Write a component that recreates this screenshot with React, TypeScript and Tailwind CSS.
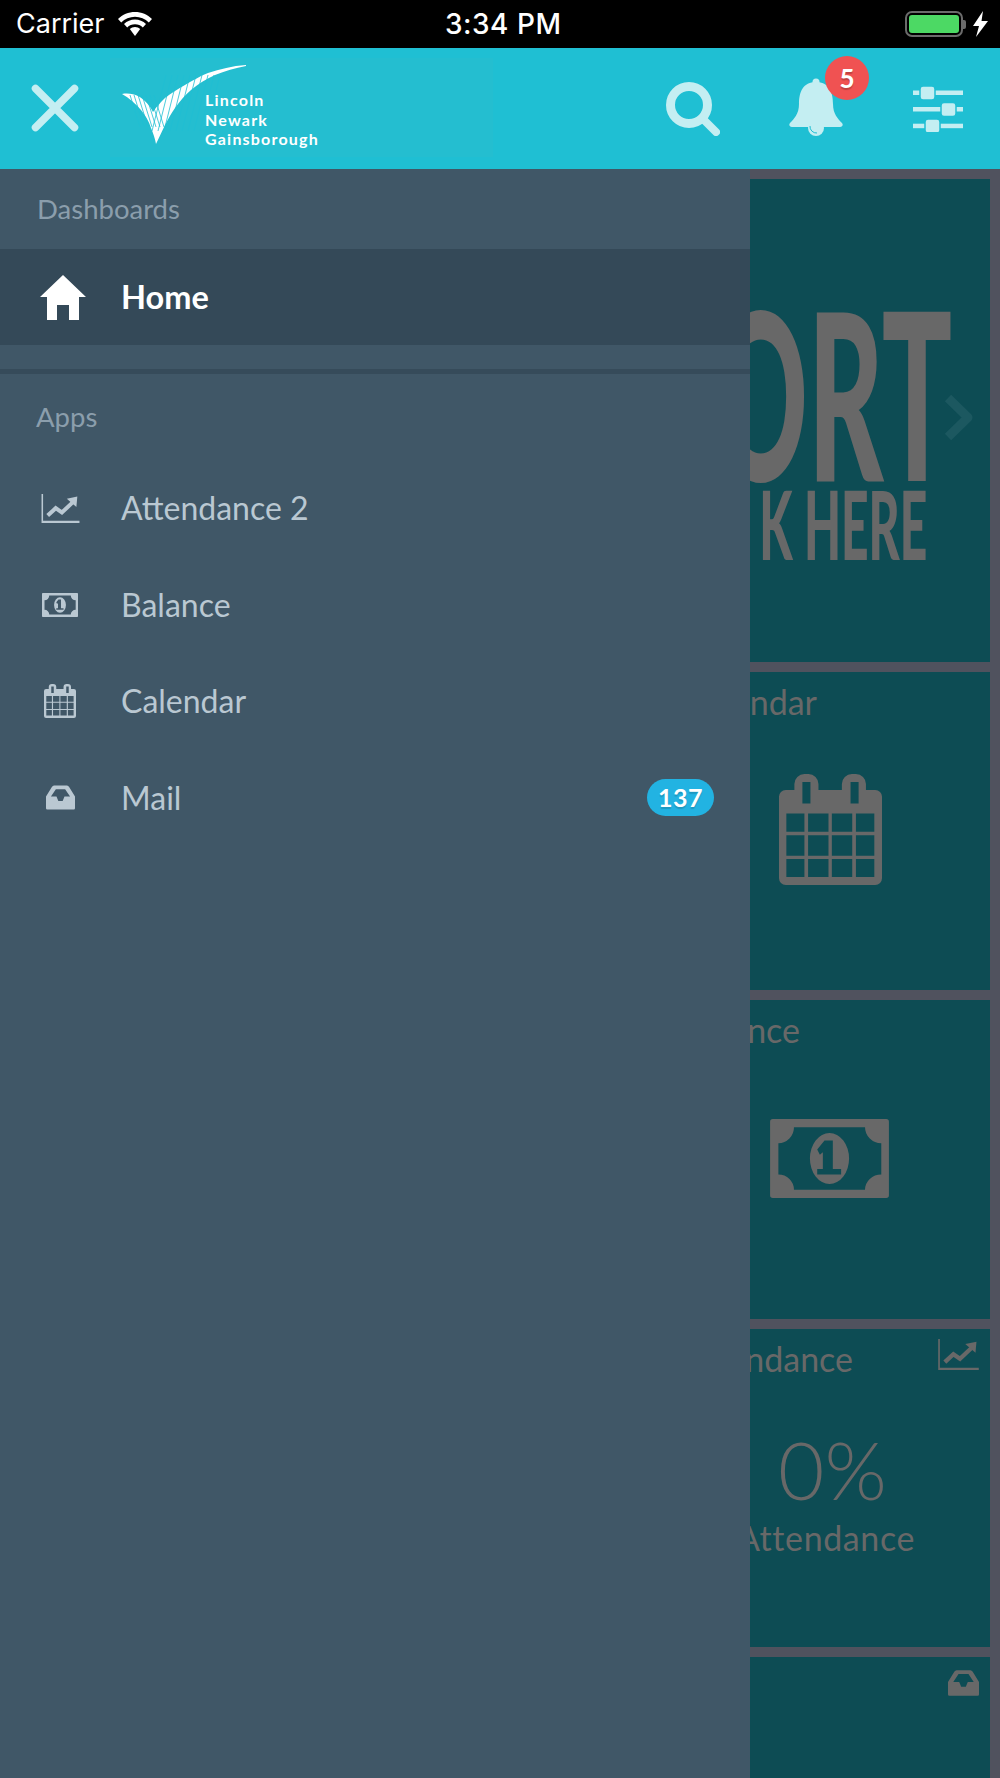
import type { ReactNode } from 'react'

const ICON_LIGHT = '#c4eef2'
const HEADER_BG = '#1fbfd3'

function Wifi() {
  return (
    <svg width="34" height="24" viewBox="0 0 34 24" fill="white">
      <path d="M17 0 C10.500 0 4.500 2.500 0 7 L3.200 10.500 C6.800 6.900 11.700 4.800 17 4.800 C22.300 4.800 27.200 6.900 30.800 10.500 L34 7 C29.500 2.500 23.500 0 17 0 Z" />
      <path d="M17 7.500 C12.800 7.500 9 9.100 6 12 L9.200 15.400 C11.300 13.400 14 12.200 17 12.200 C20 12.200 22.700 13.400 24.800 15.400 L28 12 C25 9.100 21.200 7.500 17 7.500 Z" />
      <path d="M17 15 C15 15 13.200 15.700 11.800 17 L17 24 L22.200 17 C20.800 15.700 19 15 17 15 Z" />
    </svg>
  )
}

function Logo() {
  return (
    <div className="flex h-[99px] w-[383px] items-start bg-[#24bed0] pt-[7px] pl-[12px]">
      <svg className="shrink-0" width="124" height="80" viewBox="0 0 124 80" fill="white">
        <path d="M0 29 C6 28 12 29 16 31 C23 35 28 41 31 47 C35 41 39 37 43 33 C49 28 56 24 63 20 C70 16 78 11 86 8 C98 4 110 1 124 0 L124 1 C113 3 103 6 93 10 C84 14 76 19 69 25 C63 30 58 36 53 43 C49 49 46 54 43 60 C40 66 37 73 34 79 C33 73 31 68 29 63 C27 56 23 50 19 45 C14 39 7 33 0 29 Z" />
        <g stroke={HEADER_BG} strokeWidth="0.8">
          {[8, 12, 16, 20, 24, 28, 32].map(x => (
            <line key={x} x1={x} y1="30" x2={x + 10} y2="62" />
          ))}
          {[44, 50, 56, 62, 68, 74, 80, 86, 92, 98].map(x => (
            <line key={x} x1={x} y1="10" x2={x - 14} y2="66" />
          ))}
        </g>
      </svg>
      <div className="mt-[25px] ml-[-41px] flex flex-col font-['Lato',sans-serif] text-[16px] leading-[19.5px] font-bold tracking-[1.2px] text-white">
        <span>Lincoln</span>
        <span>Newark</span>
        <span>Gainsborough</span>
      </div>
    </div>
  )
}

function SearchIcon() {
  return (
    <svg width="54" height="54" viewBox="0 0 54 54" fill="none" stroke={ICON_LIGHT} strokeLinecap="round">
      <circle cx="23" cy="23" r="18.500" strokeWidth="9" />
      <path d="M37 37 L50 50" strokeWidth="8" />
    </svg>
  )
}

function Bell() {
  return (
    <svg width="54" height="58" viewBox="0 0 54 58" fill={ICON_LIGHT}>
      <circle cx="27" cy="4" r="3.500" />
      <path d="M27 4 C40 4 44 14 44 26 C44 36 49 41 53 45 C54.500 47 53.500 49 51 49 L3 49 C0.500 49 -0.500 47 1 45 C5 41 10 36 10 26 C10 14 14 4 27 4 Z" />
      <circle cx="27" cy="50" r="8" />
      <path d="M21 48 A6.500 6.500 0 0 0 28 55" fill="none" stroke={HEADER_BG} strokeWidth="1" />
    </svg>
  )
}

function Sliders() {
  return (
    <svg width="50" height="46" viewBox="0 0 50 46" fill={ICON_LIGHT}>
      <rect x="0" y="4.500" width="50" height="4.500" />
      <rect x="0" y="21" width="50" height="4.500" />
      <rect x="0" y="37.700" width="50" height="4.500" />
      <rect x="7" y="0" width="15" height="14" rx="3" stroke={HEADER_BG} strokeWidth="1.500" />
      <rect x="28" y="16.500" width="15" height="14" rx="3" stroke={HEADER_BG} strokeWidth="1.500" />
      <rect x="12" y="33" width="15" height="14" rx="3" stroke={HEADER_BG} strokeWidth="1.500" />
    </svg>
  )
}

function HomeIcon() {
  return (
    <svg width="46" height="45" viewBox="0 0 46 45" fill="white">
      <path d="M23 0 L46 22 L39 22 L39 45 L29 45 L29 30 L17 30 L17 45 L7 45 L7 22 L0 22 Z" />
    </svg>
  )
}

function ChartIcon({ className }: { className: string }) {
  return (
    <svg viewBox="0 0 123 94" className={className} fill="currentColor">
      <path d="M0 0 H5 V87 H123 V94 H0 Z" />
      <path d="M20 70 L46 46 L66 60 L100 28" fill="none" stroke="currentColor" strokeWidth="13" />
      <path d="M82 15 L116 8 L113 42 Z" />
    </svg>
  )
}

function BillIcon({ className }: { className: string }) {
  return (
    <svg viewBox="0 0 358 238" className={className} fill="currentColor">
      <path
        fillRule="evenodd"
        d="M8 0 H350 A8 8 0 0 1 358 8 V230 A8 8 0 0 1 350 238 H8 A8 8 0 0 1 0 230 V8 A8 8 0 0 1 8 0 Z M72 25 A47 48 0 0 1 25 73 V167 A47 46 0 0 1 72 213 H286 A49 46 0 0 1 335 167 V73 A49 48 0 0 1 286 25 Z"
      />
      <path
        fillRule="evenodd"
        d="M120 119 A59 77 0 1 0 238 119 A59 77 0 1 0 120 119 Z M142 92 L164 65 H189 V151 H214 V167 H142 V151 H159 V100 L150 108 Z"
      />
    </svg>
  )
}

function CalendarIcon({ className }: { className: string }) {
  return (
    <svg viewBox="0 0 308 334" preserveAspectRatio="none" className={className} fill="currentColor">
      <path
        fillRule="evenodd"
        d="M20 48 H46 V30 A30 30 0 0 1 76 0 H88 A30 30 0 0 1 118 30 V48 H188 V30 A30 30 0 0 1 218 0 H230 A30 30 0 0 1 260 30 V48 H288 A20 20 0 0 1 308 68 V314 A20 20 0 0 1 288 334 H20 A20 20 0 0 1 0 314 V68 A20 20 0 0 1 20 48 Z M70 24 V89 H94 V24 Z M214 24 V89 H238 V24 Z M22 119 V174 H76 V119 Z M87 119 V174 H148 V119 Z M158 119 V174 H219 V119 Z M230 119 V174 H285 V119 Z M22 184 V246 H76 V184 Z M87 184 V246 H148 V184 Z M158 184 V246 H219 V184 Z M230 184 V246 H285 V184 Z M22 256 V310 H76 V256 Z M87 256 V310 H148 V256 Z M158 256 V310 H219 V256 Z M230 256 V310 H285 V256 Z"
      />
    </svg>
  )
}

function InboxIcon({ className }: { className: string }) {
  return (
    <svg viewBox="0 0 94 78" className={className} fill="currentColor">
      <path
        fillRule="evenodd"
        d="M26 0 H68 Q72 0 75 5 L94 36 V74 Q94 78 90 78 H4 Q0 78 0 74 V36 L19 5 Q22 0 26 0 Z M16 36 L32 12 H62 L78 36 H60 L54 50 H40 L34 36 Z"
      />
    </svg>
  )
}

function NavItem({ icon, label, badge }: { icon: ReactNode; label: string; badge?: string }) {
  return (
    <div className="flex h-[96.5px] items-center px-[36px] text-[#bac8d2]">
      <div className="flex w-[85px] shrink-0 items-center pl-[5px]">{icon}</div>
      <span className="text-[32px] leading-none">{label}</span>
      {badge && (
        <span className="ml-auto flex h-[37px] w-[67px] items-center justify-center rounded-full bg-[#22b3e2] text-[25px] font-bold tracking-[0.5px] text-white [text-shadow:0_2px_1px_rgba(0,0,0,0.15)]">
          {badge}
        </span>
      )}
    </div>
  )
}

function TileTitle({ pad, children }: { pad: string; children: ReactNode }) {
  return <div className={`flex h-[50px] justify-end pt-[10px] text-[34px] leading-[40px] whitespace-nowrap ${pad}`}>{children}</div>
}

export default function App() {
  return (
    <div className="flex h-[1778px] w-[1000px] flex-col overflow-hidden bg-black font-['Lato',sans-serif]">
      {/* Status bar */}
      <div className="relative flex h-[48px] shrink-0 items-center justify-between pr-[12px] pl-[16px] text-white">
        <div className="flex items-center gap-[13px]">
          <span className="font-['Inter',sans-serif] text-[27px]">Carrier</span>
          <Wifi />
        </div>
        <span className="absolute left-[445px] font-['Inter',sans-serif] text-[28px] font-medium tracking-[0.5px]">3:34 PM</span>
        <div className="flex items-center gap-[7px]">
          <div className="flex items-center">
            <div className="h-[26px] w-[58px] rounded-[7px] border-[2px] border-[#6b6b6b] p-[2px]">
              <div className="h-full w-full rounded-[3px] bg-[#4cd964]" />
            </div>
            <div className="h-[9px] w-[3px] rounded-r-[2px] bg-[#6b6b6b]" />
          </div>
          <svg width="15" height="26" viewBox="0 0 15 26" fill="white">
            <path d="M10 0 L0 15 H6 L3 26 L15 10 H8.500 Z" />
          </svg>
        </div>
      </div>

      {/* Header */}
      <div className="flex h-[121px] shrink-0 items-start bg-[#1fbfd3]">
        <svg className="mt-[36px] ml-[31px]" width="48" height="48" viewBox="0 0 48 48" stroke={ICON_LIGHT} strokeWidth="7.5" strokeLinecap="round">
          <path d="M4.500 4.500 L43.500 43.500 M43.500 4.500 L4.500 43.500" />
        </svg>
        <div className="mt-[10px] ml-[31px]">
          <Logo />
        </div>
        <div className="mt-[30px] ml-auto flex items-start pr-[37px]">
          <div className="mt-[4px] mr-[69px]">
            <SearchIcon />
          </div>
          <div className="relative mr-[70px]">
            <Bell />
            <span className="absolute top-[-22px] right-[-26px] flex h-[44px] w-[44px] items-center justify-center rounded-full bg-[#f05252] text-[26px] font-bold text-white [text-shadow:0_2px_1px_rgba(0,0,0,0.2)]">
              5
            </span>
          </div>
          <div className="mt-[8px]">
            <Sliders />
          </div>
        </div>
      </div>

      <div className="flex min-h-0 flex-1">
        {/* Drawer */}
        <div className="flex w-[750px] shrink-0 flex-col bg-[#405767]">
          <div className="flex h-[80px] items-center pl-[37px] text-[27.5px] text-[#8b9eac]">Dashboards</div>
          <div className="flex h-[96px] items-center bg-[#344958] pl-[40px] text-white">
            <div className="w-[81px]">
              <HomeIcon />
            </div>
            <span className="text-[32.5px] font-bold">Home</span>
          </div>
          <div className="mt-[24px] h-[5px] bg-[#364b5a]" />
          <div className="flex h-[86px] items-center pl-[36px] text-[27.5px] text-[#8b9eac]">Apps</div>
          <NavItem icon={<ChartIcon className="h-[29px] w-[39px]" />} label="Attendance 2" />
          <NavItem icon={<BillIcon className="ml-[1px] h-[24px] w-[36px]" />} label="Balance" />
          <NavItem icon={<CalendarIcon className="ml-[3px] h-[34px] w-[32px]" />} label="Calendar" />
          <NavItem icon={<InboxIcon className="ml-[5px] h-[25px] w-[29px]" />} label="Mail" badge="137" />
        </div>

        {/* Dimmed dashboard behind the drawer */}
        <div className="flex min-w-0 flex-1 flex-col gap-[10px] overflow-hidden bg-[#50525e] pt-[10px] pr-[10px] text-[#686868]">
          <div className="relative flex h-[483px] shrink-0 flex-col items-end overflow-hidden bg-[#0d4c54] pt-[125px] pr-[38px] font-black whitespace-nowrap">
            <div className="origin-right scale-x-[0.5] text-[233px] leading-[174px]">ORT</div>
            <div className="mt-[7px] mr-[25px] origin-right scale-x-[0.5] text-[96px] leading-[76px]">K HERE</div>
            <svg className="absolute top-[214px] right-[16px]" width="31" height="49" viewBox="0 0 31 49" fill="none" stroke="#1c5860" strokeWidth="9" strokeLinejoin="round">
              <path d="M5 5 L25 24.500 L5 44" />
            </svg>
          </div>
          <div className="h-[318px] shrink-0 overflow-hidden bg-[#0d4c54]">
            <TileTitle pad="pr-[173px]">ndar</TileTitle>
            <CalendarIcon className="mt-[52px] ml-[29px] h-[111px] w-[103px]" />
          </div>
          <div className="h-[319px] shrink-0 overflow-hidden bg-[#0d4c54]">
            <TileTitle pad="pr-[190px]">nce</TileTitle>
            <BillIcon className="mt-[69px] ml-[20px] h-[79px] w-[119px]" />
          </div>
          <div className="h-[318px] shrink-0 overflow-hidden bg-[#0d4c54]">
            <div className="relative">
              <TileTitle pad="pr-[137px]">ndance</TileTitle>
              <ChartIcon className="absolute top-[10px] right-[11px] h-[31px] w-[41px]" />
            </div>
            <div className="mt-[50px] ml-[28px] text-[80px] leading-[80px] font-light">0%</div>
            <div className="mt-[9px] flex justify-end pr-[75px] text-[34px] leading-[40px] tracking-[0.6px] whitespace-nowrap">Attendance</div>
          </div>
          <div className="flex h-[121px] shrink-0 justify-end overflow-hidden bg-[#0d4c54] pt-[13px] pr-[11px]">
            <InboxIcon className="h-[26px] w-[31px]" />
          </div>
        </div>
      </div>
    </div>
  )
}
